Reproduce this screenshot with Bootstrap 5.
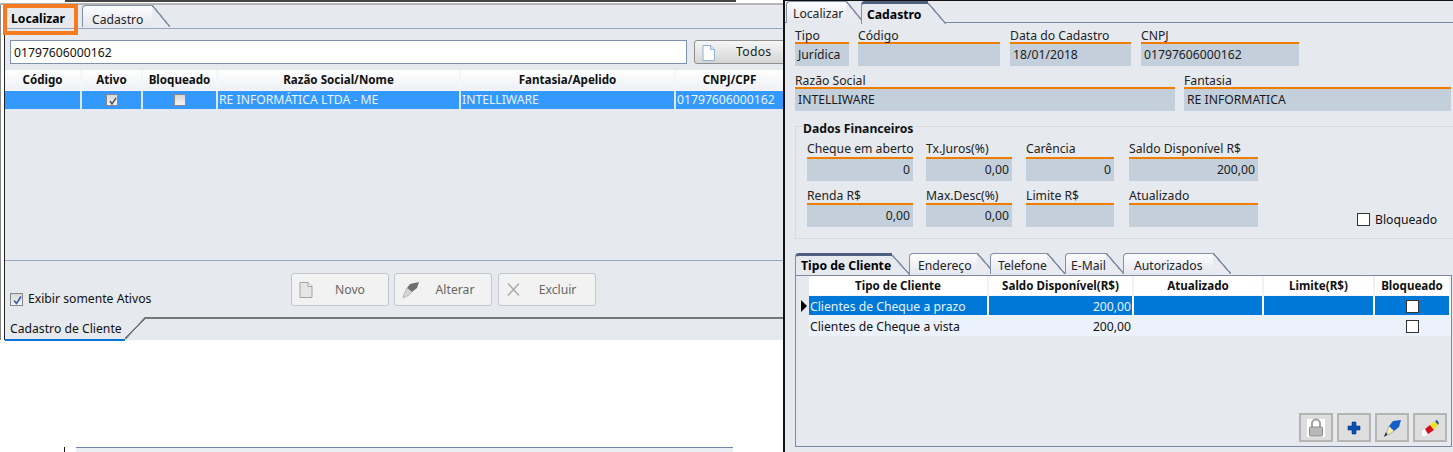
<!DOCTYPE html>
<html lang="pt-BR"><head><meta charset="utf-8"><title>Cadastro de Cliente</title>
<link href="https://cdn.jsdelivr.net/npm/bootstrap@5.3.0/dist/css/bootstrap.min.css" rel="stylesheet">
<style>
html,body{margin:0;background:#fff;overflow:hidden}
body{font-family:"Noto Sans","DejaVu Sans",sans-serif;font-size:12.2px;line-height:14px;color:#111}
.stage{width:1453px;height:452px;overflow:hidden}
.lcol{width:783px;flex:none;height:452px;overflow:hidden;position:relative}
.rcol{width:670px;flex:none;height:452px;border-left:2px solid #111;border-top:1px solid #111;background:#e6e9ee;overflow:hidden}
.strip{height:6px;background:linear-gradient(#fff 0 3px,#b5b5b5 3px 5px,#8b8b8b 5px)}
.strip i{display:block;margin-left:65px;width:671px;height:2px;background:#444}
.wrap{border-left:1px solid #888;padding-left:3px;height:335px}
.pane{border-left:1px solid #222;height:335px;background:#e6e9ee;width:779px}
.tabs{border-bottom:1px solid #98a6bd}
.tb{position:relative;display:block;height:22px;line-height:22px;border:0;border-top:1px solid #8390aa;border-left:1px solid #8390aa;border-radius:4px 0 0 0;background:linear-gradient(#fdfdfe,#e3e6ee);text-align:left;padding:1px 0 0 9px;color:#222;text-decoration:none;white-space:nowrap}
.tb::after{content:"";position:absolute;top:-1px;bottom:0;right:-18px;width:18px;background:linear-gradient(to top right,#e9ebf1 0 calc(50% - 1px),#8390aa calc(50% - .6px) calc(50% + .6px),transparent calc(50% + 1px))}
.tb.on{background:#e6e9ee;border-top:3px solid #4e5f7f;font-weight:700;color:#000;margin-bottom:-1px;height:23px;padding-top:0;z-index:1}
.tb.on::after{background:linear-gradient(to top right,#e6e9ee 0 calc(50% - 1px),#8390aa calc(50% - .6px) calc(50% + .6px),transparent calc(50% + 1px))}
.hl{position:absolute;left:3px;top:4px;width:75px;height:31px;border:4px solid #f47b20;z-index:3}
.tbflat{height:23px;line-height:28px;width:72px;padding-left:6px;font-weight:700;color:#000;margin-right:5px}
.tabs .tb{padding-top:3px}
.srch{height:24px;margin:11px 0 0 5px;width:677px;flex:none;border:1px solid #7d93ad;background:#fff;border-radius:0;padding:0 3px;font:inherit;font-size:12.2px;color:#111;box-shadow:none}
.todos{width:95px;height:24px;margin:11px 0 0 7px;flex:none;border:1px solid #8f8f8f;border-radius:3px;background:linear-gradient(#f6f6f6,#d5d5d5);font-size:12.2px;color:#222;padding:1px 0 0 7px;gap:21px;letter-spacing:.3px}
.gr{border-collapse:separate;border-spacing:0;table-layout:fixed;margin:0;color:inherit;--bs-table-bg:transparent;width:auto}
.gr th,.gr td{padding:0 1px;border:0;border-right:2px solid #f4f6fa;font-size:12.2px;overflow:hidden;white-space:nowrap;box-shadow:none;vertical-align:middle;background:transparent}
.gr th{text-align:center;height:21px;font-weight:700;color:#111;background:linear-gradient(#fff,#eef0f4);border-bottom:1px solid #f4f6fa;font-size:11.6px}
.gl td{height:19px;background:#3399ff;color:#e8f3ff;border-right-color:#dfe9f6;border-bottom:1px solid #dfe9f6}
.gl th:last-child,.gl td:last-child{border-right:0}
.ck{display:inline-block;width:12px;height:12px;border:1px solid #888;background:linear-gradient(#d8d8d8,#f4f4f4);vertical-align:middle;position:relative;top:-1px}
.ck svg{position:absolute;left:1px;top:1px}
.lbar{border-bottom:1px solid #98a6bd;height:0;margin-top:auto}
.lbot{height:56px;position:relative}
.lchk{margin:31px 0 0 5px;gap:5px;width:281px;height:14px;flex:none}
.lchk .ck{width:13px;height:13px;top:0}
.btn-d{width:98px;height:33px;margin-top:12px;flex:none;border:1px solid #c3c6ca;border-radius:3px;background:#f2f2f3;color:#666;font-size:12.2px;padding:0 0 0 7px;display:flex;align-items:center;text-align:left}
.btn-d span{flex:1;text-align:center;padding-right:1px}
.ltab{height:23px;border-top:2px solid #777;width:100%;margin-top:0}
.ltab-in{width:120px;border-bottom:2px solid #0a74d6;padding:1px 0 0 5px;position:relative;margin-top:-2px;background:#e6e9ee;line-height:21px;height:24px}
.ltab-in::after{content:"";position:absolute;top:0;bottom:0;right:-21px;width:21px;background:linear-gradient(to top left,#e6e9ee 0 calc(50% - 1px),#777 calc(50% - .7px) calc(50% + .7px),#e6e9ee calc(50% + 1px))}
.frag{margin:107px 0 0 64px;height:5px;border-left:1px solid #111;padding-left:11px}
.frag i{display:block;width:657px;height:5px;background:#e9edf4;border-top:1px solid #6f86ad}
.rtabs{height:22px;border-bottom:1px solid #7c88a3;padding-left:1px}
.row-f{gap:9px;padding-left:10px;margin-top:5px}
.row-f.first{margin-top:3px}
.fld{flex:none}
.fl{height:16px;line-height:19px;white-space:nowrap;color:#222}
.fv{height:24px;border-top:2px solid #f07d00;background:#c3cfdb;padding:0 3px;line-height:22px;color:#1b1b1b;white-space:nowrap}
.fv.n{text-align:right}
.fset{margin:15px 0 0 10px;height:113px;border:1px solid #d9dbdf;border-right:0;padding:0 0 0 11px}
.fleg{font-weight:700;color:#111;margin:-5px 0 0 -4px;height:13px;line-height:13px;background:#e6e9ee;width:max-content;padding-right:3px;display:block}
.frow{margin-top:7px}
.frow+.frow{margin-top:7px}
.fset .fl{height:15px;line-height:13px}
.fset .frow+.frow .fl{line-height:16px}
.stabs{margin:14px 0 0 10px;height:22px;width:657px}
.stabs .tb{height:21px;line-height:21px}
.stabs .tb.on{height:22px;line-height:20px;padding-left:5px}
.box{margin-left:10px;width:657px;height:172px;border:1px solid #7c88a3;padding:0}
.gs th{border-right-color:#eef1f8;background:#fff;height:20px;padding-top:1px}
.gs td{height:20px;border-right:2px solid #eef1f8;background:#ecf2fc;color:#111;padding-top:2px}
.gs tr.sel td{background:#0078d7;color:#e9f3ff;border-bottom:1px solid #eef1f8;border-right-color:#fff}
.gs .ind{background:transparent!important;border-right:0;padding:0;border-bottom:0!important}
.ck.w{width:13px;height:13px;border:1px solid #333;background:#fff}
.tool{margin:auto 4px 4px 0;gap:4px}
.tbtn{width:34px;height:29px;border:2px solid #b4b4b4;background:#dedede;border-radius:0;padding:0}
</style></head><body>
<div class="stage d-flex">
<section class="lcol d-flex flex-column">
<div class="strip"><i></i></div>
<div class="hl"></div>
<div class="wrap">
<div class="pane d-flex flex-column">
<div class="tabs d-flex">
<div class="tbflat">Localizar</div>
<a class="tb" style="width:70px" href="#">Cadastro</a>
</div>
<div class="d-flex">
<input class="form-control srch" value="01797606000162">
<button class="btn todos d-flex align-items-center" type="button">
<svg width="13" height="16" viewBox="0 0 13 16"><path d="M1 .5h7.500l4 4v11H1z" fill="#fff" stroke="#8fb0d8"/><path d="M8.500 .5v4h4" fill="#dfe9f6" stroke="#8fb0d8"/></svg><span>Todos</span></button>
</div>
<table class="table gr gl" style="margin-top:6px;width:778px">
<colgroup><col style="width:77px"><col style="width:61px"><col style="width:75px"><col style="width:243px"><col style="width:215px"><col style="width:107px"></colgroup>
<thead><tr><th>Código</th><th>Ativo</th><th>Bloqueado</th><th>Razão Social/Nome</th><th>Fantasia/Apelido</th><th>CNPJ/CPF</th></tr></thead>
<tbody><tr><td></td>
<td class="text-center"><span class="ck"><svg width="10" height="10" viewBox="0 0 10 10"><path d="M2 5l2 3 4-6" fill="none" stroke="#555" stroke-width="1.500"/></svg></span></td>
<td class="text-center"><span class="ck"></span></td>
<td>RE INFORMÁTICA LTDA - ME</td><td>INTELLIWARE</td><td>01797606000162</td></tr></tbody>
</table>
<div class="lbar"></div>
<div class="lbot d-flex">
<label class="lchk d-flex align-items-center"><span class="ck"><svg width="11" height="11" viewBox="0 0 11 11"><path d="M2 5.500l2.500 3 4.500-7" fill="none" stroke="#3a5aa8" stroke-width="1.600"/></svg></span>Exibir somente Ativos</label>
<div class="d-flex" style="gap:5px">
<button class="btn-d" type="button" disabled><svg width="14" height="16" viewBox="0 0 14 16"><path d="M1 .5h8l4 4v11H1z" fill="#e6e6e6" stroke="#a5a5a5"/><path d="M9 .5v4h4" fill="#f4f4f4" stroke="#a5a5a5"/></svg><span>Novo</span></button>
<button class="btn-d" type="button" disabled style="margin-right:1px"><svg width="18" height="18" viewBox="0 0 18 18"><path d="M5 7l3-4 9-2-2 6-5 4z" fill="#6e6e6e"/><path d="M5 7l5 4-3 3-4 2-2 1 1-4z" fill="#d6d6d6" stroke="#999" stroke-width=".6"/></svg><span>Alterar</span></button>
<button class="btn-d" type="button" disabled><svg width="15" height="15" viewBox="0 0 15 15"><path d="M2 1.500l11 12M13 1.500l-11 12" stroke="#aaa" stroke-width="1.500" fill="none"/></svg><span>Excluir</span></button>
</div>
</div>
<div class="ltab"><div class="ltab-in">Cadastro de Cliente</div></div>
</div>
</div>
<div class="frag"><i></i></div>
</section>

<section class="rcol d-flex flex-column">
<div class="rtabs d-flex">
<a class="tb" style="width:60px;padding-left:6px" href="#">Localizar</a>
<div class="tb on" style="width:67px;margin-left:15px;padding-left:5px">Cadastro</div>
</div>
<div class="d-flex row-f first">
<div class="fld" style="width:54px"><div class="fl">Tipo</div><div class="fv">Jurídica</div></div>
<div class="fld" style="width:142px"><div class="fl">Código</div><div class="fv"></div></div>
<div class="fld" style="width:121px;margin-left:1px"><div class="fl">Data do Cadastro</div><div class="fv">18/01/2018</div></div>
<div class="fld" style="width:158px;margin-left:1px"><div class="fl">CNPJ</div><div class="fv">01797606000162</div></div>
</div>
<div class="d-flex row-f">
<div class="fld" style="width:380px"><div class="fl">Razão Social</div><div class="fv">INTELLIWARE</div></div>
<div class="fld" style="width:267px"><div class="fl">Fantasia</div><div class="fv">RE INFORMATICA</div></div>
</div>
<div class="fset">
<div class="fleg">Dados Financeiros</div>
<div class="d-flex frow">
<div class="fld" style="width:106px"><div class="fl">Cheque em aberto</div><div class="fv n">0</div></div>
<div class="fld" style="width:86px;margin-left:13px"><div class="fl">Tx.Juros(%)</div><div class="fv n">0,00</div></div>
<div class="fld" style="width:88px;margin-left:14px"><div class="fl">Carência</div><div class="fv n">0</div></div>
<div class="fld" style="width:129px;margin-left:15px"><div class="fl">Saldo Disponível R$</div><div class="fv n">200,00</div></div>
</div>
<div class="d-flex frow">
<div class="fld" style="width:106px"><div class="fl">Renda R$</div><div class="fv n">0,00</div></div>
<div class="fld" style="width:86px;margin-left:13px"><div class="fl">Max.Desc(%)</div><div class="fv n">0,00</div></div>
<div class="fld" style="width:88px;margin-left:14px"><div class="fl">Limite R$</div><div class="fv n"></div></div>
<div class="fld" style="width:129px;margin-left:15px"><div class="fl">Atualizado</div><div class="fv n"></div></div>
<label class="d-flex align-items-center align-self-end" style="margin:0 0 0 99px;gap:5px;height:14px"><span class="ck w"></span>Bloqueado</label>
</div>
</div>
<div class="stabs d-flex">
<div class="tb on" style="width:97px">Tipo de Cliente</div>
<a class="tb" style="width:68px;margin-left:17px;padding-left:8px" href="#">Endereço</a>
<a class="tb" style="width:57px;margin-left:13px;padding-left:7px" href="#">Telefone</a>
<a class="tb" style="width:41px;margin-left:18px;padding-left:5px" href="#">E-Mail</a>
<a class="tb" style="width:90px;margin-left:17px;padding-left:10px" href="#">Autorizados</a>
</div>
<div class="box d-flex flex-column">
<table class="table gr gs" style="width:655px">
<colgroup><col style="width:13px"><col style="width:180px"><col style="width:145px"><col style="width:130px"><col style="width:111px"><col style="width:76px"></colgroup>
<thead><tr><th class="ind"></th><th>Tipo de Cliente</th><th>Saldo Disponível(R$)</th><th>Atualizado</th><th>Limite(R$)</th><th>Bloqueado</th></tr></thead>
<tbody>
<tr class="sel"><td class="ind"><svg width="8" height="12" viewBox="0 0 8 12" class="d-block ms-1"><path d="M1 0l6 6-6 6z" fill="#000"/></svg></td><td>Clientes de Cheque a prazo</td><td class="text-end">200,00</td><td></td><td></td><td class="text-center"><span class="ck w"></span></td></tr>
<tr><td class="ind"></td><td>Clientes de Cheque a vista</td><td class="text-end">200,00</td><td></td><td></td><td class="text-center"><span class="ck w"></span></td></tr>
</tbody></table>
<div class="d-flex tool ms-auto">
<button class="btn tbtn d-flex align-items-center justify-content-center" type="button" aria-label="Bloquear"><svg width="20" height="20" viewBox="0 0 20 20"><rect x="1" y="1" width="18" height="18" fill="#fff"/><path d="M6 9V5.500a4 4 0 0 1 8 0V9" fill="none" stroke="#a3a3a3" stroke-width="2"/><rect x="3.500" y="9" width="13" height="9" rx="1" fill="#b9b9b9" stroke="#8d8d8d"/></svg></button>
<button class="btn tbtn d-flex align-items-center justify-content-center" type="button" aria-label="Novo"><svg width="14" height="14" viewBox="0 0 14 14"><path d="M5 1h4v4h4v4H9v4H5V9H1V5h4z" fill="#0a4fb0" stroke="#083c88" stroke-width=".6"/></svg></button>
<button class="btn tbtn d-flex align-items-center justify-content-center" type="button" aria-label="Alterar"><svg width="20" height="20" viewBox="0 0 20 20"><path d="M7 8l4-5 8-1-2 7-5 4z" fill="#1260c8"/><path d="M7 8l5 5-4 3-3 1 0-4z" fill="#f3efb0" stroke="#777" stroke-width=".5"/><path d="M2 19l3-2-1-3z" fill="#111"/></svg></button>
<button class="btn tbtn d-flex align-items-center justify-content-center" type="button" aria-label="Apagar"><svg width="20" height="20" viewBox="0 0 20 20"><path d="M2 13l3-2 3 5-3 2H2z" fill="#fff"/><path d="M5 11l5-4 4 5-6 4z" fill="#d4101c"/><path d="M10 7l5-4 3 4-4 5z" fill="#f4e021"/><path d="M15 3l2-1 2 3-1 2z" fill="#1a4fc0"/></svg></button>
</div>
</div>
</section>
</div>
</body></html>
